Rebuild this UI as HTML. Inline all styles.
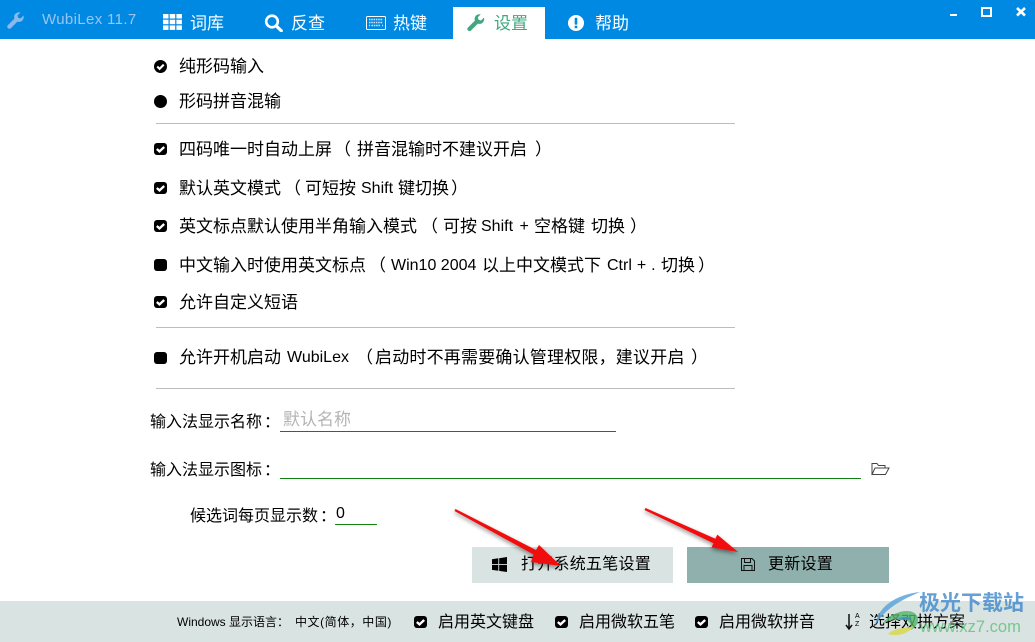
<!DOCTYPE html>
<html><head><meta charset="utf-8">
<style>
html,body{margin:0;padding:0;background:#fff}
#p{position:relative;width:1035px;height:642px;overflow:hidden;background:#fff;font-family:"Liberation Sans","Noto Sans CJK SC",sans-serif;color:#000}
.t{position:absolute;white-space:nowrap;font-size:17px;line-height:20px;letter-spacing:0}
.l{font-size:16px}
.b{font-size:16px}
.bb{font-size:16px;letter-spacing:.25px}
.s{font-size:12px}
.w{color:#fff}
.a{position:absolute;display:block}
.h{position:absolute;left:156px;width:579px;height:1px;background:#bdbdbd}
.u{position:absolute;height:1px;background:#118011}
.ck{position:absolute;width:13px;height:12px;border-radius:3px;background:#000}
.ck svg{position:absolute;left:0;top:0}
</style></head><body><div id="p">
<div class="a" style="left:0;top:0;width:1035px;height:39px;background:#0089e3"></div>
<div class="a" style="left:453px;top:7px;width:92px;height:32px;background:#fff"></div>

<svg class="a" style="left:7px;top:12px" width="18" height="18" viewBox="0 0 18 18"><path d="M16.500 3.500l-3 3-2.300-.7-.7-2.300 3-3C11 0 8.800.8 7.800 2.500 7 3.800 6.900 5.300 7.400 6.600L.9 13.100c-.9.9-.9 2.200 0 3s2.100.9 3 0l6.500-6.500c1.400.5 2.900.3 4.200-.5 1.700-1.100 2.500-3.400 1.900-5.600z" fill="#8db9ea"/></svg>
<div class="t" style="left:42px;top:10px;font-size:15px;letter-spacing:.35px;color:#9cc4ef">WubiLex 11.7</div>

<svg class="a" style="left:163px;top:14px" width="19" height="16" viewBox="0 0 19 16" fill="#fff"><rect x="0" y="0" width="5.500" height="4.500"/><rect x="6.700" y="0" width="5.500" height="4.500"/><rect x="13.400" y="0" width="5.500" height="4.500"/><rect x="0" y="5.700" width="5.500" height="4.500"/><rect x="6.700" y="5.700" width="5.500" height="4.500"/><rect x="13.400" y="5.700" width="5.500" height="4.500"/><rect x="0" y="11.400" width="5.500" height="4.500"/><rect x="6.700" y="11.400" width="5.500" height="4.500"/><rect x="13.400" y="11.400" width="5.500" height="4.500"/></svg>
<div class="t w" style="left:190px;top:14px">词库</div>

<svg class="a" style="left:264px;top:14px" width="19" height="18" viewBox="0 0 19 18"><circle cx="8" cy="7.500" r="5.800" fill="none" stroke="#fff" stroke-width="2.600"/><path d="M12.300 12l5 4.800" stroke="#fff" stroke-width="3.200" stroke-linecap="round"/></svg>
<div class="t w" style="left:291px;top:14px">反查</div>

<svg class="a" style="left:366px;top:16px" width="20" height="14" viewBox="0 0 20 14"><rect x=".5" y=".5" width="19" height="13" rx="1" fill="none" stroke="#fff"/><path d="M3 3.500h14M3 6.500h14M3 9.500h1M5.500 9.500h9M16 9.500h1" stroke="#cfe6fa" stroke-width="1.500" stroke-dasharray="1.500 .8"/></svg>
<div class="t w" style="left:393px;top:14px">热键</div>

<svg class="a" style="left:467px;top:14px" width="18" height="18" viewBox="0 0 18 18"><path d="M17 3.500l-3 3-2.500-.7-.7-2.500 3-3C11.500 0 9.300.7 8.300 2.500 7.500 3.800 7.400 5.300 7.900 6.600L1 13.500c-.9.9-.9 2.100 0 3s2.100.9 3 0l6.900-6.900c1.400.5 2.900.3 4.200-.5 1.700-1.100 2.500-3.400 1.900-5.600z" fill="#41a77e"/></svg>
<div class="t" style="left:494px;top:14px;color:#41a77e">设置</div>

<svg class="a" style="left:568px;top:15px" width="16" height="16" viewBox="0 0 16 16"><circle cx="8" cy="8" r="8" fill="#fff"/><rect x="6.700" y="2.800" width="2.600" height="6.800" rx=".5" fill="#0089e3"/><rect x="6.700" y="10.700" width="2.600" height="2.500" fill="#0089e3"/></svg>
<div class="t w" style="left:595px;top:14px">帮助</div>

<div class="a" style="left:950px;top:14px;width:7px;height:2px;background:#fff"></div>
<div class="a" style="left:981px;top:7px;width:7px;height:6px;border:2px solid #fff"></div>
<svg class="a" style="left:1016px;top:7px" width="10" height="10" viewBox="0 0 10 10"><path d="M1 1l8 7.500M9 1L1 8.500" stroke="#fff" stroke-width="2.600"/></svg>

<svg class="a" style="left:154px;top:60px" width="13" height="13" viewBox="0 0 14 14"><circle cx="7" cy="7" r="7" fill="#000"/><path d="M3.500 7l2.500 2.500 4.500-4.500" fill="none" stroke="#fff" stroke-width="2.300"/></svg>
<div class="t" style="left:179px;top:57px">纯形码输入</div>
<div class="a" style="left:154px;top:95px;width:13px;height:13px;border-radius:50%;background:#000"></div>
<div class="t" style="left:179px;top:92px">形码拼音混输</div>
<div class="h" style="top:123px"></div>

<div class="ck" style="left:154px;top:143px"><svg width="13" height="12" viewBox="0 0 13 12"><path d="M2.800 6l2.700 2.400 4.700-4.400" fill="none" stroke="#fff" stroke-width="2.300"/></svg></div>
<div class="t" style="left:179px;top:140px">四码唯一时自动上屏</div>
<div class="t" style="left:334px;top:140px">（</div>
<div class="t" style="left:357px;top:140px">拼音混输时不建议开启</div>
<div class="t" style="left:535px;top:140px">）</div>

<div class="ck" style="left:154px;top:182px"><svg width="13" height="12" viewBox="0 0 13 12"><path d="M2.800 6l2.700 2.400 4.700-4.400" fill="none" stroke="#fff" stroke-width="2.300"/></svg></div>
<div class="t" style="left:179px;top:179px">默认英文模式</div>
<div class="t" style="left:284px;top:179px">（</div>
<div class="t" style="left:305px;top:179px">可短按</div>
<div class="t l" style="left:361px;top:179px">Shift</div>
<div class="t" style="left:398px;top:179px">键切换</div>
<div class="t" style="left:451px;top:179px">）</div>

<div class="ck" style="left:154px;top:220px"><svg width="13" height="12" viewBox="0 0 13 12"><path d="M2.800 6l2.700 2.400 4.700-4.400" fill="none" stroke="#fff" stroke-width="2.300"/></svg></div>
<div class="t" style="left:179px;top:217px">英文标点默认使用半角输入模式</div>
<div class="t" style="left:421px;top:217px">（</div>
<div class="t" style="left:443px;top:217px">可按</div>
<div class="t l" style="left:481px;top:217px;word-spacing:2px">Shift +</div>
<div class="t" style="left:534px;top:217px">空格键</div>
<div class="t" style="left:591px;top:217px">切换</div>
<div class="t" style="left:630px;top:217px">）</div>

<div class="ck" style="left:154px;top:259px"></div>
<div class="t" style="left:179px;top:256px">中文输入时使用英文标点</div>
<div class="t" style="left:369px;top:256px">（</div>
<div class="t l" style="left:391px;top:256px">Win10 2004</div>
<div class="t" style="left:482px;top:256px">以上中文模式下</div>
<div class="t l" style="left:607px;top:256px;word-spacing:.5px">Ctrl + .</div>
<div class="t" style="left:661px;top:256px">切换</div>
<div class="t" style="left:698px;top:256px">）</div>

<div class="ck" style="left:154px;top:296px"><svg width="13" height="12" viewBox="0 0 13 12"><path d="M2.800 6l2.700 2.400 4.700-4.400" fill="none" stroke="#fff" stroke-width="2.300"/></svg></div>
<div class="t" style="left:179px;top:293px">允许自定义短语</div>
<div class="h" style="top:327px"></div>

<div class="ck" style="left:154px;top:352px"></div>
<div class="t" style="left:179px;top:348px">允许开机启动</div>
<div class="t l" style="left:287px;top:348px">WubiLex</div>
<div class="t" style="left:356px;top:348px">（</div>
<div class="t" style="left:375px;top:348px;letter-spacing:.2px">启动时不再需要确认管理权限，建议开启</div>
<div class="t" style="left:691px;top:348px">）</div>
<div class="h" style="top:388px"></div>

<div class="t b" style="left:150px;top:413px">输入法显示名称<span style="margin-left:2px">：</span></div>
<div class="t" style="left:283px;top:410px;color:#b4b4b4">默认名称</div>
<div class="u" style="left:280px;top:431px;width:336px"></div>
<div class="t b" style="left:150px;top:461px">输入法显示图标<span style="margin-left:2px">：</span></div>
<div class="u" style="left:280px;top:478px;width:581px"></div>
<svg class="a" style="left:871px;top:462px" width="19" height="14" viewBox="0 0 19 14"><path d="M1 12.500V1.500h5l1.500 2h6.500v2.500M1 12.500L4 6h14l-3.500 6.500z" fill="none" stroke="#444" stroke-width="1"/></svg>
<div class="t b" style="left:190px;top:507px">候选词每页显示数<span style="margin-left:2px">：</span></div>
<div class="t b" style="left:336px;top:504px">0</div>
<div class="u" style="left:335px;top:524px;width:42px"></div>

<div class="a" style="left:472px;top:547px;width:201px;height:36px;background:#d9e3e1"></div>
<svg class="a" style="left:492px;top:557px" width="15" height="15" viewBox="0 0 15 15" fill="#000"><path d="M0 2.200l6.300-.9v5.800H0zM7.200 1.200L15 0v7.100H7.200zM0 8h6.300v5.800L0 12.900zM7.200 8H15v7l-7.800-1.100z"/></svg>
<div class="t bb" style="left:521px;top:555px">打开系统五笔设置</div>
<div class="a" style="left:687px;top:547px;width:202px;height:36px;background:#8fb0ad"></div>
<svg class="a" style="left:741px;top:558px" width="14" height="13" viewBox="0 0 14 13"><path d="M.5.500h10.500l2.500 2.500v9.500H.5z" fill="none" stroke="#111"/><path d="M3.500 1v3.500h6V1M3 12V7.500h8V12" fill="none" stroke="#111"/></svg>
<div class="t bb" style="left:768px;top:555px">更新设置</div>

<div class="a" style="left:0;top:601px;width:1035px;height:41px;background:#d9e3e1"></div>
<div class="t s" style="left:177px;top:612px">Windows</div>
<div class="t s" style="left:229px;top:612px">显示语言：</div>
<div class="t s" style="left:295px;top:612px;letter-spacing:.55px">中文(简体，中国)</div>
<div class="ck" style="left:414px;top:616px"><svg width="13" height="12" viewBox="0 0 13 12"><path d="M2.800 6l2.700 2.400 4.700-4.400" fill="none" stroke="#fff" stroke-width="2.300"/></svg></div>
<div class="t b" style="left:438px;top:613px">启用英文键盘</div>
<div class="ck" style="left:555px;top:616px"><svg width="13" height="12" viewBox="0 0 13 12"><path d="M2.800 6l2.700 2.400 4.700-4.400" fill="none" stroke="#fff" stroke-width="2.300"/></svg></div>
<div class="t b" style="left:579px;top:613px">启用微软五笔</div>
<div class="ck" style="left:695px;top:616px"><svg width="13" height="12" viewBox="0 0 13 12"><path d="M2.800 6l2.700 2.400 4.700-4.400" fill="none" stroke="#fff" stroke-width="2.300"/></svg></div>
<div class="t b" style="left:719px;top:613px">启用微软拼音</div>
<svg class="a" style="left:845px;top:613px" width="17" height="18" viewBox="0 0 17 18"><path d="M4 1v14M1 12l3 4 3-4" fill="none" stroke="#111" stroke-width="1.500"/></svg>
<div class="t" style="left:855px;top:613px;font-size:7px;line-height:8px;white-space:normal;width:7px">A<br>Z</div>
<div class="t b" style="left:869px;top:613px">选择双拼方案</div>

<svg class="a" style="left:872px;top:590px" width="60" height="48" viewBox="0 0 60 48"><path d="M48 2C28 4 6 14 3 36 11 21 26 11 48 2z" fill="#5ba4dc" opacity=".85"/><path d="M10 34C18 22 40 16 45 26c3 6-1 11-6 14 2-10-10-16-29-6z" fill="#53b56a" opacity=".8"/><path d="M16 44c6-6 18-6 26-8-5 7-15 11-26 8z" fill="#d8d84a" opacity=".85"/><path d="M24 30c5-4 12-4 16-1-4 1-11 1-16 1z" fill="#3a8fd0" opacity=".8"/></svg>
<div class="t" style="left:919px;top:592px;font-size:21px;line-height:24px;font-weight:bold;color:#3f88cb;opacity:.8">极光下载站</div>
<div class="t" style="left:920px;top:617px;font-size:16.500px;line-height:20px;color:#5fc07a;opacity:.8">www.xz7.com</div>

<svg class="a" style="left:0;top:0;pointer-events:none" width="1035" height="642">
<defs><filter id="s" x="-20%" y="-20%" width="140%" height="140%"><feDropShadow dx="0" dy="2" stdDeviation="2" flood-color="#000" flood-opacity=".45"/></filter></defs>
<g fill="#f00e0e" filter="url(#s)">
<polygon points="455.500,509 536,550 539,545 561,566 531,562 533.500,554.500 454.500,511"/>
<polygon points="645.500,508 715.400,538.700 717.300,534.600 738,552 711.500,547.400 713.400,543.300 644.500,510"/>
</g></svg>
</div></body></html>
